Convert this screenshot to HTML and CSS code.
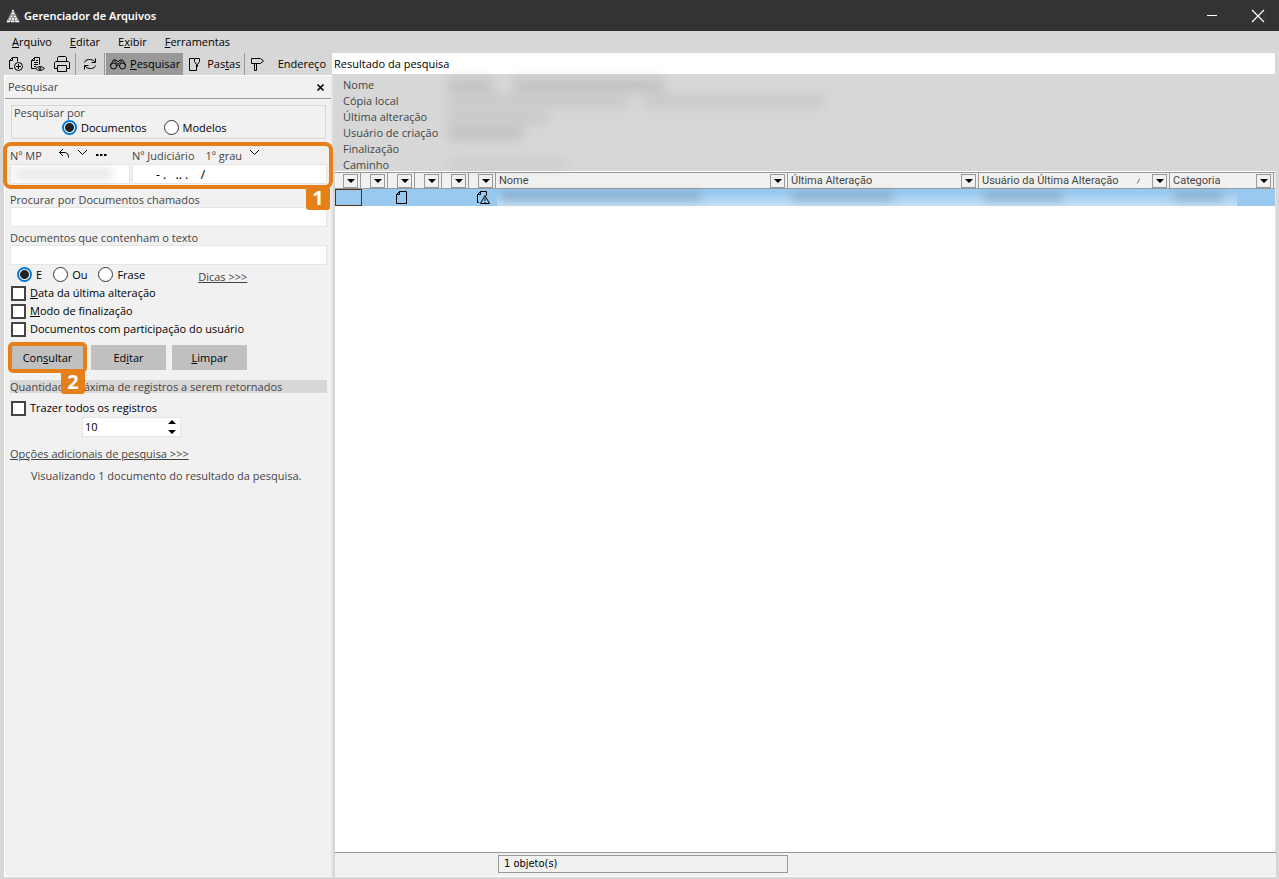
FILE: index.html
```
<!DOCTYPE html>
<html lang="pt-BR">
<head>
<meta charset="utf-8">
<title>Gerenciador de Arquivos</title>
<link rel="stylesheet" href="styles.css">
</head>
<body>
<header class="titlebar">
  <svg class="logo" width="14" height="14" viewBox="0 0 14 14"><path d="M7 0l7 13H0z" fill="#8a8a8a"/><path d="M7 1v2M5.500 4.500h3M4.500 7.500h2M8 7.500h2M3 10h2M6 10h2M9 10h2M1 12.500h3M5 12.500h3M9 12.500h4" stroke="#fff" stroke-width="1.400"/></svg>
  <h1>Gerenciador de Arquivos</h1>
  <button class="winbtn" aria-label="Minimizar"><svg width="12" height="12"><path d="M1 5.500h10" stroke="#fff"/></svg></button>
  <button class="winbtn" aria-label="Fechar"><svg width="14" height="14"><path d="M1 1l12 12M13 1L1 13" stroke="#fff" stroke-width="1.200"/></svg></button>
</header>
<nav class="menubar">
  <button><u>A</u>rquivo</button><button><u>E</u>ditar</button><button>E<u>x</u>ibir</button><button><u>F</u>erramentas</button>
</nav>
<div class="toolbar">
  <div class="tools">
    <button class="tool" aria-label="Novo"><svg class="ico" viewBox="0 0 18 18"><path d="M6 13.500H2.500V5.500l3-3h5v4M2.500 5.500h3v-3"/><circle cx="11.500" cy="11.500" r="4"/><path d="M11.500 9v5M9 11.500h5"/></svg></button>
    <button class="tool" aria-label="Visualizar"><svg class="ico" viewBox="0 0 18 18"><path d="M6 13.500H2.500V5.500l3-3h5v7M2.500 5.500h3v-3M7 5.500h2M5 7.500h4M5 9.500h4M5 11.500h2M6.500 13.500q4.500-4 9 0q-4.500 4-9 0z"/><circle cx="11" cy="13.500" r="1"/></svg></button>
    <button class="tool" aria-label="Imprimir"><svg class="ico" viewBox="0 0 18 18"><path d="M4.500 6.500v-4l1-1h7l1 1v4M4.500 13.500h-3v-6l1-1h13l1 1v6h-3M4.500 10.500h9v6h-9z"/></svg></button>
    <span class="sep"></span>
    <button class="tool refresh" aria-label="Atualizar"><svg class="ico" viewBox="0 0 18 18"><path d="M3.500 7.500q1-3 4-3h2q3 0 5 3M14.500 3.500v4h-4M14.500 10.500q-1 3-4 3h-2q-3 0-5-3M3.500 14.500v-4h4"/></svg></button>
    <span class="sep"></span>
    <button class="tool active"><svg class="ico" viewBox="0 0 18 18"><circle cx="4.500" cy="11" r="3"/><circle cx="13.500" cy="11" r="3"/><path d="M1.500 10l3-5 4 4h1l4-4 3 5M4.500 5q3-1 4.500 2 1.500-3 4.500-2M7.500 10.500q1.500-1 3 0"/></svg><span><u>P</u>esquisar</span></button>
    <button class="tool"><svg class="ico" viewBox="0 0 18 18"><path d="M8 3.500H3.500v12h7V11M8.500 3.500v3l2 3v2h1v-2l2-3v-3z"/></svg><span>Pas<u>t</u>as</span></button>
    <span class="sep"></span>
    <button class="tool" aria-label="Ir"><svg class="ico" viewBox="0 0 18 18"><path d="M2.500 3.500h9l3 2.500-3 2.500h-9zM5.500 8.500v7h2v-7"/></svg></button>
    <label for="addr">Endereço</label>
  </div>
  <input id="addr" class="address" value="Resultado da pesquisa">
</div>
<main class="main">
  <aside class="panel">
    <div class="panel-head"><h2>Pesquisar</h2><button aria-label="Fechar painel"><svg width="9" height="9"><path d="M1.500 1.500l6 6M7.500 1.500l-6 6" stroke="#000" stroke-width="1.600"/></svg></button></div>
    <form class="form">
      <fieldset class="scope"><span class="scope-title">Pesquisar por</span>
        <div class="scope-options"><label><input type="radio" name="tipo" checked>Documentos</label><label><input type="radio" name="tipo">Modelos</label></div>
      </fieldset>
      <section class="numbers marked">
        <div class="mp">
          <div class="numhead"><label for="mp">Nº MP</label>
            <svg width="12" height="12"><path d="M5 1L1.500 4.500 5 8M1.500 4.500h6q3.500 1 3 5" class="line"/></svg>
            <svg width="11" height="12"><path d="M1 2l4.500 4.500L10 2" class="line"/></svg>
            <svg width="12" height="12"><path d="M1 7h2.500M5 7h2.500M9 7h2.500" stroke="#000" stroke-width="2"/></svg></div>
          <div class="boxed"><input id="mp"><span class="smudge mp-smudge"></span></div>
        </div>
        <div class="jud">
          <div class="numhead"><label for="jud">Nº Judiciário</label><span>1º grau</span><svg width="11" height="12"><path d="M1 2l4.500 4.500L10 2" class="line"/></svg></div>
          <input id="jud" value="- .   .. .    /">
        </div>
        <span class="badge one">1</span>
      </section>
      <label class="cap" for="nome">Procurar por Documentos chamados</label>
      <input id="nome" class="text">
      <label class="cap second" for="texto">Documentos que contenham o texto</label>
      <input id="texto" class="text">
      <div class="mode"><label><input type="radio" name="modo" checked>E</label><label><input type="radio" name="modo">Ou</label><label><input type="radio" name="modo">Frase</label><a href="#">Dicas &gt;&gt;&gt;</a></div>
      <label class="check"><input type="checkbox"><span><u>D</u>ata da última alteração</span></label>
      <label class="check"><input type="checkbox"><span><u>M</u>odo de finalização</span></label>
      <label class="check"><input type="checkbox"><span>Documentos com participação do usuário</span></label>
      <div class="buttons">
        <div class="marked primary"><button type="button">Con<u>s</u>ultar</button><span class="badge two">2</span></div>
        <button type="button">Ed<u>i</u>tar</button><button type="button"><u>L</u>impar</button>
      </div>
      <div class="band">Quantidade máxima de registros a serem retornados</div>
      <label class="check all"><input type="checkbox"><span>Trazer todos os registros</span></label>
      <div class="spin"><input aria-label="Quantidade máxima" value="10"><svg width="10" height="16"><path d="M1 5l4-4 4 4zM1 11l4 4 4-4z"/></svg></div>
      <a class="more" href="#">Opções adicionais de pesquisa &gt;&gt;&gt;</a>
      <p class="status">Visualizando 1 documento do resultado da pesquisa.</p>
    </form>
  </aside>
  <section class="result">
    <dl class="details">
      <dt>Nome</dt><dd><span class="smudge d1a"></span><span class="smudge d1b"></span></dd>
      <dt>Cópia local</dt><dd><span class="smudge d2a"></span><span class="smudge d2b"></span></dd>
      <dt>Última alteração</dt><dd><span class="smudge d3"></span></dd>
      <dt>Usuário de criação</dt><dd><span class="smudge d4"></span></dd>
      <dt>Finalização</dt><dd></dd>
      <dt>Caminho</dt><dd><span class="smudge d6"></span></dd>
    </dl>
    <div class="grid">
      <table>
        <colgroup><col class="c-icon"><col class="c-icon"><col class="c-icon"><col class="c-icon"><col class="c-icon"><col class="c-icon"><col class="c-name"><col class="c-date"><col class="c-user"><col class="c-cat"></colgroup>
        <thead><tr>
          <th><div><button aria-label="Filtrar"></button></div></th>
          <th><div><button aria-label="Filtrar"></button></div></th>
          <th><div><button aria-label="Filtrar"></button></div></th>
          <th><div><button aria-label="Filtrar"></button></div></th>
          <th><div><button aria-label="Filtrar"></button></div></th>
          <th><div><button aria-label="Filtrar"></button></div></th>
          <th><div>Nome<button aria-label="Filtrar"></button></div></th>
          <th><div>Última Alteração<button aria-label="Filtrar"></button></div></th>
          <th><div>Usuário da Última Alteração<svg class="sort" width="9" height="8"><path d="M1 7l3-6" stroke="#777"/><path d="M4 1l4 6H1" stroke="#fff" fill="none"/></svg><button aria-label="Filtrar"></button></div></th>
          <th><div>Categoria<button aria-label="Filtrar"></button></div></th>
        </tr></thead>
        <tbody><tr>
          <td class="focus"></td><td></td>
          <td><svg class="doc" width="13" height="15"><path d="M1.500 4.500l3-3h7v12h-10zM4.500 1.500v3h-3" class="line"/></svg></td>
          <td></td><td></td>
          <td><svg class="doc" width="15" height="15"><path d="M3 12.500H1.500v-8l3-3h6v4M4.500 1.500v3h-3M4.500 13.500l4.500-8 4.500 8zM9 8v3M9 12v1" class="line"/></svg></td>
          <td class="haze"><span class="smudge r1"></span></td><td class="haze"><span class="smudge r2"></span></td><td class="haze"><span class="smudge r3"></span></td><td class="haze last"><span class="smudge r4"></span></td>
        </tr></tbody>
      </table>
    </div>
    <footer class="foot"><div>1 objeto(s)</div></footer>
  </section>
</main>
</body>
</html>
```
FILE: styles.css
```
* { box-sizing: border-box; }
body { margin: 0; height: 100vh; display: flex; flex-direction: column; background: #d7d7d7; color: #000; font: 11px/16px "Open Sans", "Noto Sans", sans-serif; overflow: hidden; }
h1, h2, p, dl, dd { margin: 0; }
button, input { font: inherit; color: inherit; border: 0; padding: 0; margin: 0; background: none; }
svg { flex: none; }
.line { fill: none; stroke: #000; }
.titlebar { height: 31px; flex: none; display: flex; align-items: center; background: #333; color: #fff; padding-left: 6px; gap: 4px; }
.titlebar h1 { flex: 1; font: bold 11px/16px "Noto Sans", sans-serif; font-weight: 600; }
.winbtn { width: 42px; height: 31px; display: flex; align-items: center; justify-content: center; }
.menubar { height: 22px; flex: none; display: flex; gap: 18px; padding: 0 12px; }
.toolbar { height: 22px; flex: none; display: flex; padding-right: 4px; }
.tools { width: 332px; flex: none; display: flex; align-items: center; padding-left: 4px; }
.tools label { margin-left: auto; padding-right: 6px; font-size: 11px; }
.tool { height: 22px; display: flex; align-items: center; gap: 3px; padding: 0 3px; font-size: 11px; }
.tool:first-child { padding-right: 1px; }
.tool.refresh { padding: 0 4px; }
.tool.active { background: #999; }
.ico { width: 18px; height: 18px; fill: none; stroke: #000; stroke-width: 1; }
.sep { width: 1px; height: 22px; background: #999; margin: 0 1px; }
.address { flex: 1; min-width: 0; background: #fff; padding: 0 2px; height: 21px; }
.main { flex: 1; min-height: 0; display: flex; padding: 0 3px 2px 4px; }
.panel { width: 329px; flex: none; background: #f1f1f1; border: 1px solid #fff; border-right: 2px solid #e5e5e5; }
.panel-head { height: 23px; display: flex; align-items: center; justify-content: space-between; border-bottom: 1px solid #999; padding: 0 6px 0 3px; color: #444; }
.panel-head h2 { font-size: 11px; font-weight: 400; }
.panel-head button { display: flex; }
.form { display: flex; flex-direction: column; padding: 6px 4px 0 5px; color: #444; }
.form input { color: #000; }
.scope { margin: 0 1px; border: 1px solid #d7d7d7; padding: 0 2px; height: 34px; }
.scope-title { display: block; line-height: 14px; }
.scope-options { display: flex; gap: 17px; padding-left: 48px; }
.scope-options label, .mode label { display: flex; align-items: center; gap: 4px; height: 15px; color: #000; }
input[type=radio] { appearance: none; width: 15px; height: 15px; border: 1px solid #333; border-radius: 50%; background: #fff; flex: none; }
input[type=radio]:checked { border: 2px solid #0078d7; background: radial-gradient(circle, #222 0 4px, #fff 5px); }
input[type=checkbox] { appearance: none; width: 15px; height: 15px; border: 2px solid #444; background: #fff; flex: none; }
.marked { border: 4px solid #e47f1a; position: relative; }
.numbers { display: flex; gap: 2px; margin: 3px -6px 0 -7px; height: 47px; border-radius: 8px; padding: 2px 2px 0 3px; }
.mp { width: 120px; }
.jud { flex: 1; }
.numhead { display: flex; height: 16px; gap: 7px; }
.numhead label + svg { margin-left: 9px; }
.jud .numhead { gap: 11px; }
.jud .numhead svg { margin-left: -4px; }
.numbers input { width: 100%; height: 20px; background: #fff; border: 1px solid #e5e5e5; display: block; }
#jud { padding-left: 23px; white-space: pre; font-family: "Noto Sans", sans-serif; font-size: 12px; }
.boxed { position: relative; }
.badge { position: absolute; width: 24px; height: 24px; background: #e47f1a; color: #fff; border-radius: 3px; font: bold 20px/24px "Open Sans", sans-serif; text-align: center; }
.one { right: -1px; top: 40px; }
.two { left: 49px; top: 24px; }
.smudge { position: absolute; display: block; background: #777; opacity: .3; filter: blur(5px); }
.mp-smudge { left: 4px; top: 5px; width: 98px; height: 10px; opacity: .2; }
.cap { margin-top: 3px; height: 15px; }
.cap.second { margin-top: 3px; }
.text { height: 20px; background: #fff; border: 1px solid #e5e5e5; }
.mode { display: flex; gap: 11px; padding: 2px 0 0 7px; height: 19px; }
.mode a { margin: 2px 0 0 42px; }
a { color: #444; }
.check { display: flex; align-items: center; gap: 4px; height: 18px; padding-left: 1px; color: #000; }
.buttons { display: flex; gap: 6px; align-items: center; margin: 4px 0 7px -2px; height: 31px; color: #000; }
.buttons button { width: 75px; height: 25px; background: #c0c0c0; }
.primary { width: 79px; height: 31px; border-radius: 5px; margin-right: -2px; }
.primary button { width: 71px; height: 23px; display: block; }
.band { background: #d7d7d7; line-height: 13px; }
.all { margin-top: 6px; }
.spin { margin-left: 72px; width: 99px; height: 20px; background: #fff; border: 1px solid #e5e5e5; display: flex; align-items: center; padding: 0 3px 0 2px; }
.spin input { flex: 1; min-width: 0; }
.more { margin: 9px 0 6px; align-self: flex-start; }
.status { padding-left: 21px; }
.result { flex: 1; min-width: 0; display: flex; flex-direction: column; padding-left: 2px; }
.details { display: grid; grid-template-columns: 105px 1fr; grid-auto-rows: 1fr; padding: 2px 0 0 8px; line-height: 16px; height: 96px; color: #444; }
.details dd { position: relative; }
.details .smudge { height: 12px; top: 2px; opacity: .24; filter: blur(6px); }
.details .d1a { left: 0; width: 45px; }
.details .d1b { left: 66px; width: 150px; }
.details .d2a { left: 0; width: 180px; opacity: .16; }
.details .d2b { left: 196px; width: 180px; opacity: .16; }
.details .d3 { left: 0; width: 100px; opacity: .16; }
.details .d4 { left: 0; width: 76px; }
.details .d6 { left: 0; width: 120px; opacity: .1; }
.grid { flex: 1; background: #fff; border-top: 1px solid #fff; border-right: 1px solid #e5e5e5; }
table { width: 100%; table-layout: fixed; border-collapse: separate; border-spacing: 0; }
.c-icon { width: 27px; }
.c-name { width: 292px; }
.c-date { width: 191px; }
.c-user { width: 191px; }
th { height: 17px; padding: 0; background: #f1f1f1; border-top: 1px solid #999; border-bottom: 1px solid #999; font: 11px/15px Roboto, "Noto Sans", sans-serif; color: #444; text-align: left; }
th div { display: flex; align-items: center; height: 15px; margin-right: 1px; padding: 0 2px; border-right: 1px solid #999; }
th button { width: 15px; height: 14px; margin-left: auto; border: 1px solid #999; display: flex; align-items: center; justify-content: center; }
th button::before { content: ""; border: 4px solid transparent; border-top-color: #000; border-bottom: 0; }
.sort { margin-left: auto; }
.sort + button { margin-left: 7px; }
td { height: 17px; padding: 0; background: #99c9ef; position: relative; }
td.focus { border: 1px solid #5c2e10; }
.haze { background: linear-gradient(#99c9ef 20%, #c5dff5); }
.haze.last { background: linear-gradient(#99c9ef 20%, #c5dff5) 0 0 / 66px 100% no-repeat #99c9ef; }
td .smudge { top: 3px; height: 9px; background: #345; opacity: .24; }
.doc { display: block; margin-left: 6px; }
.r1 { left: 4px; width: 200px; }
.r2 { left: 4px; width: 100px; }
.r3 { left: 4px; width: 78px; }
.r4 { left: 3px; width: 48px; }
.foot { height: 25px; flex: none; background: #f1f1f1; border-top: 1px solid #999; border-bottom: 1px solid #fff; padding: 2px 0 0 163px; }
.foot div { width: 290px; height: 18px; border: 1px solid #999; padding-left: 5px; font: 11px/16px "DejaVu Sans Condensed", sans-serif; }
```
